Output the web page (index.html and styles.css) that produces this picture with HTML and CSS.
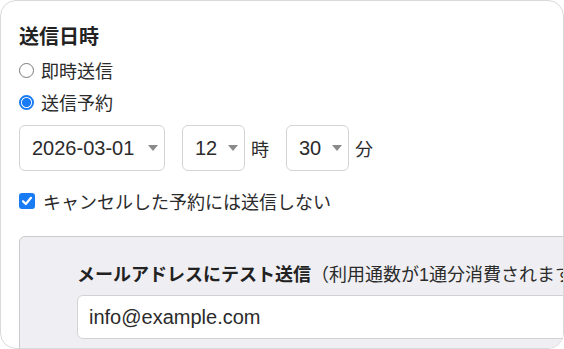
FILE: index.html
```html
<!DOCTYPE html>
<html lang="ja">
<head>
<meta charset="utf-8">
<title>送信日時</title>
<link rel="stylesheet" href="styles.css">
</head>
<body>
<div class="card">
  <h2 class="title">送信日時</h2>
  <div class="option">
    <span class="radio"></span>
    <span>即時送信</span>
  </div>
  <div class="option">
    <span class="radio checked"></span>
    <span>送信予約</span>
  </div>
  <div class="datetime">
    <div class="select date">
      <span>2026-03-01</span>
      <svg class="caret" width="10" height="6" viewBox="0 0 10 6"><path d="M0 0H10L5 6Z"/></svg>
    </div>
    <div class="select small">
      <span>12</span>
      <svg class="caret" width="10" height="6" viewBox="0 0 10 6"><path d="M0 0H10L5 6Z"/></svg>
    </div>
    <span class="unit">時</span>
    <div class="select small">
      <span>30</span>
      <svg class="caret" width="10" height="6" viewBox="0 0 10 6"><path d="M0 0H10L5 6Z"/></svg>
    </div>
    <span class="unit">分</span>
  </div>
  <div class="option check-row">
    <span class="checkbox">
      <svg width="12" height="12" viewBox="0 0 12 12"><path d="M2 6.2L4.8 9L10 2.8" fill="none" stroke="#fff" stroke-width="2.2" stroke-linecap="round" stroke-linejoin="round"/></svg>
    </span>
    <span>キャンセルした予約には送信しない</span>
  </div>
  <div class="test-box">
    <div class="test-label"><strong>メールアドレスにテスト送信</strong>（利用通数が1通分消費されます）</div>
    <div class="text-input">info@example.com</div>
  </div>
</div>
</body>
</html>
```
FILE: styles.css
```css
html, body {
  margin: 0;
  padding: 0;
  background: #ffffff;
}

body {
  font-family: "Liberation Sans", "Noto Sans CJK JP", sans-serif;
  font-size: 18px;
  color: #2b2b2b;
}

.card {
  box-sizing: border-box;
  width: 564px;
  height: 349px;
  border: 1px solid #d9d9d9;
  border-radius: 16px;
  overflow: hidden;
  padding: 22px 0 0 18px;
  background: #ffffff;
}

.title {
  margin: 0;
  font-size: 20px;
  font-weight: bold;
  line-height: 28px;
  color: #222222;
}

.option {
  display: flex;
  align-items: center;
  gap: 7px;
  height: 32px;
  white-space: nowrap;
}

.title + .option {
  margin-top: 3px;
}

.radio {
  box-sizing: border-box;
  width: 15px;
  height: 15px;
  border-radius: 50%;
  border: 1px solid #7a7a7a;
  background: #ffffff;
  flex: none;
}

.radio.checked {
  border: 2px solid #1a7cf5;
  background: radial-gradient(circle, #1a7cf5 0 4.2px, #ffffff 4.8px);
}

.datetime {
  display: flex;
  align-items: center;
  margin-top: 7px;
}

.select {
  box-sizing: border-box;
  height: 46px;
  display: flex;
  align-items: center;
  justify-content: space-between;
  padding: 0 6px 0 12px;
  border: 1px solid #d4d4d4;
  border-radius: 6px;
  background: #ffffff;
  font-size: 20px;
  color: #2b2b2b;
}

.select.date {
  width: 146px;
  margin-right: 17px;
}

.select.small {
  width: 63px;
}

.caret {
  fill: #8a8a8a;
  flex: none;
}

.unit {
  margin: 0 17px 0 6px;
}

.check-row {
  margin-top: 14px;
  gap: 8px;
}

.checkbox {
  box-sizing: border-box;
  width: 16px;
  height: 16px;
  border-radius: 3px;
  background: #1a7cf5;
  display: flex;
  align-items: center;
  justify-content: center;
  flex: none;
}

.checkbox svg {
  display: block;
}

.test-box {
  box-sizing: border-box;
  width: 640px;
  margin-top: 19px;
  padding: 24px 0 20px 57px;
  border: 1px solid #cacace;
  border-radius: 6px;
  background: #efeff3;
}

.test-label {
  line-height: 28px;
  white-space: nowrap;
  color: #2b2b2b;
}

.test-label strong {
  font-weight: bold;
  color: #222222;
}

.text-input {
  box-sizing: border-box;
  height: 44px;
  margin-top: 6px;
  display: flex;
  align-items: center;
  padding-left: 11px;
  border: 1px solid #d2d2d2;
  border-radius: 6px;
  background: #ffffff;
  font-size: 20px;
  color: #2b2b2b;
}
```
